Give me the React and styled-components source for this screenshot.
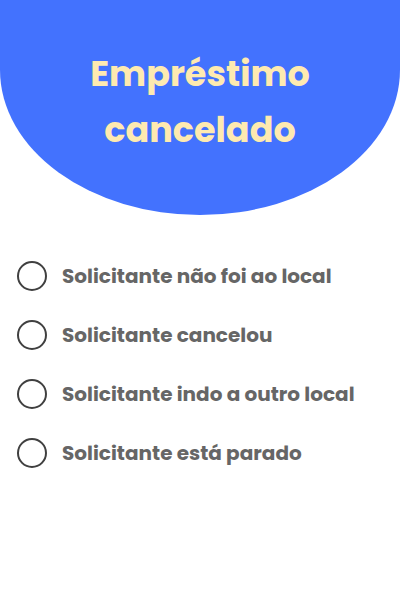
import React, { useState } from "react";
import styled, { createGlobalStyle } from "styled-components";

const GlobalStyle = createGlobalStyle`
  body {
    margin: 0;
    background: #ffffff;
    font-family: Poppins, "Open Sans", "DejaVu Sans", sans-serif;
  }
`;

const reasons = [
  "Solicitante não foi ao local",
  "Solicitante cancelou",
  "Solicitante indo a outro local",
  "Solicitante está parado",
];

function App() {
  const [selected, setSelected] = useState(null);

  return (
    <Page>
      <GlobalStyle />
      <Header>
        <Title>
          Empréstimo
          <br />
          cancelado
        </Title>
      </Header>
      <List>
        {reasons.map((r, i) => (
          <Option key={r} onClick={() => setSelected(i)}>
            <Radio checked={selected === i} />
            <Label>{r}</Label>
          </Option>
        ))}
      </List>
    </Page>
  );
}

export default App;

const Page = styled.div`
  width: 400px;
  height: 600px;
  background: #ffffff;
  overflow: hidden;
`;

const Header = styled.div`
  height: 215px;
  background-color: #4372fe;
  border-radius: 0 0 200px 200px / 0 0 145px 145px;
  display: flex;
  align-items: flex-start;
  justify-content: center;
  padding-top: 46px;
  box-sizing: border-box;
`;

const Title = styled.h1`
  margin: 0;
  color: #feeab0;
  font-size: 35px;
  font-weight: 700;
  line-height: 56px;
  text-align: center;
`;

const List = styled.div`
  display: flex;
  flex-direction: column;
  gap: 29px;
  padding: 46px 0 0 17px;
`;

const Option = styled.div`
  display: flex;
  align-items: center;
  gap: 15px;
  cursor: pointer;
  user-select: none;
`;

const Radio = styled.span`
  width: 26px;
  height: 26px;
  border: 2.5px solid #404040;
  border-radius: 50%;
  box-sizing: content-box;
  flex-shrink: 0;
  background: ${(p) => (p.checked ? "radial-gradient(#4372fe 45%, transparent 50%)" : "transparent")};
`;

const Label = styled.span`
  color: #666666;
  font-size: 20px;
  font-weight: 700;
`;
